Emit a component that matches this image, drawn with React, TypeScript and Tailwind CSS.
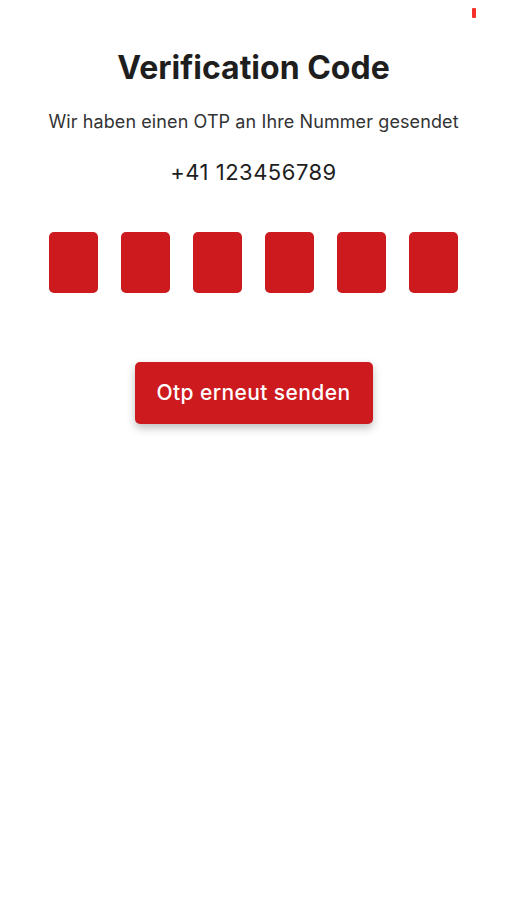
import React from 'react';

const SLOTS = [0, 1, 2, 3, 4, 5];

export default function App() {
  return (
    <div className="relative min-h-[900px] w-full bg-white font-['Inter','Noto_Sans',sans-serif] text-[#1c1c1e]">
      {/* leftover status bar mark */}
      <div className="absolute left-[472px] top-[8px] h-[10px] w-[4px] rounded-[1px] bg-[#f5302a]" />

      <div className="flex flex-col items-center pt-[48px]">
        <h1 className="text-[32px] font-bold leading-[40px] text-[#1e1e1e]">Verification Code</h1>
        <p className="mt-[22px] text-[18px] leading-[24px] tracking-[0.1px] text-[#333333]">
          Wir haben einen OTP an Ihre Nummer gesendet
        </p>
        <p className="mt-[24px] text-[22px] leading-[28px] tracking-[0.5px] text-[#1e1e1e]">+41 123456789</p>

        <div className="mt-[46px] flex gap-[23px]">
          {SLOTS.map((i) => (
            <div key={i} className="h-[61px] w-[49px] rounded-[5px] bg-[#cc1a1f]" />
          ))}
        </div>

        <button className="mt-[69px] h-[62px] w-[238px] rounded-[5px] bg-[#cc1a1f] text-[21px] font-medium tracking-[0.4px] text-white shadow-[0_4px_8px_rgba(0,0,0,0.25)]">
          Otp erneut senden
        </button>
      </div>
    </div>
  );
}
